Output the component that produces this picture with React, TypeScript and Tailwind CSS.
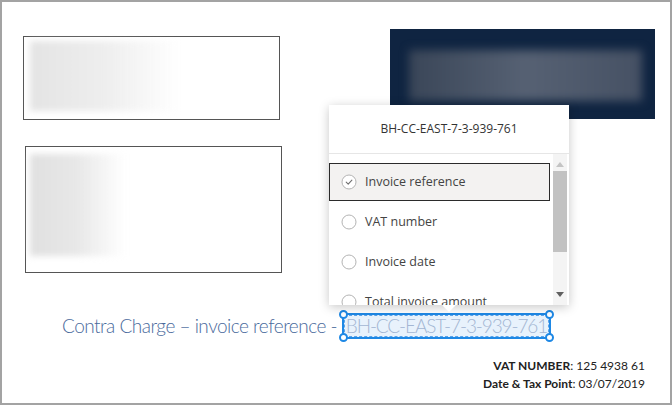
import React from 'react';

const OPTIONS = ['Invoice reference', 'VAT number', 'Invoice date', 'Total invoice amount'];

function Radio({ checked }: { checked: boolean }) {
  return (
    <svg width="16" height="16" viewBox="0 0 16 16" fill="none" className="shrink-0">
      <circle cx="8" cy="8" r="7" fill="white" stroke="#b4b4b4" strokeWidth="1" />
      {checked && (
        <path d="M5.2 8.2L7.2 10.1L10.9 6.1" stroke="#707070" strokeWidth="1.1" strokeLinecap="round" strokeLinejoin="round" />
      )}
    </svg>
  );
}

function Handle({ className }: { className: string }) {
  return <span className={`absolute w-[9px] h-[9px] rounded-full bg-white border-2 border-[#1e88e5] ${className}`} />;
}

function Dropdown() {
  return (
    <div className="absolute left-[327px] top-[103px] w-[240px] h-[200px] bg-white shadow-[0_2px_10px_rgba(0,0,0,0.22)] font-['Open_Sans',sans-serif]">
      <div className="h-[48px] flex items-center justify-center text-[12px] text-[#333]">
        BH-CC-EAST-7-3-939-761
      </div>
      <div className="h-px bg-[#e6e6e6]" />
      <div className="flex h-[151px] overflow-hidden">
        <div className="flex-1 flex flex-col pt-[9px]">
          {OPTIONS.map((label, i) => (
            <div
              key={label}
              className={`flex items-center gap-[8px] shrink-0 h-[38px] pl-[11px] text-[12.5px] text-[#444] ${
                i === 0 ? 'bg-[#f3f2f1] border border-[#2b2b2b]' : 'border border-transparent'
              } ${i > 0 ? 'mt-[2px]' : ''}`}
            >
              <Radio checked={i === 0} />
              <span>{label}</span>
            </div>
          ))}
        </div>
        {/* scrollbar */}
        <div className="w-[14px] ml-[3px] mr-[2px] flex flex-col items-center bg-[#f4f4f4]">
          <svg width="8" height="5" viewBox="0 0 8 5" className="mt-[8px]">
            <path d="M0 5L4 0L8 5Z" fill="#c4c4c4" />
          </svg>
          <div className="w-full h-[81px] mt-[4px] bg-[#c2c2c2]" />
          <div className="flex-1" />
          <svg width="8" height="5" viewBox="0 0 8 5" className="mb-[8px]">
            <path d="M0 0L8 0L4 5Z" fill="#606060" />
          </svg>
        </div>
      </div>
      {/* pointer */}
      <div className="absolute left-[113px] bottom-[-7px] w-0 h-0 border-l-[7px] border-r-[7px] border-t-[7px] border-l-transparent border-r-transparent border-t-white" />
    </div>
  );
}

export default function App() {
  return (
    <div className="relative w-[672px] h-[405px] bg-white border-2 border-[#a3a3a3] overflow-hidden font-['Lato',sans-serif]">
      {/* top area */}
      <div className="flex items-start">
        <div className="flex flex-col">
          <div className="ml-[21px] mt-[34px] w-[257px] h-[84px] border border-[#555] p-[4px] pl-[6px]">
            <div className="w-[150px] h-[70px] bg-gradient-to-r from-[#e4e4e4] via-[#eeeeee] to-transparent blur-[3px]" />
          </div>
          <div className="ml-[23px] mt-[26px] w-[257px] h-[127px] border border-[#555] p-[7px] pl-[4px]">
            <div className="w-[95px] h-[102px] bg-gradient-to-r from-[#e0e0e0] via-[#e8e8e8] to-transparent blur-[3px]" />
          </div>
        </div>
        <div className="ml-auto mr-[15px] mt-[27px] w-[265px] h-[90px] bg-[#0f2441] px-[19px] pt-[21px]">
          <div className="w-[233px] h-[51px] bg-gradient-to-r from-[#3a4658] via-[#566173] to-[#465164] blur-[5px]" />
        </div>
      </div>

      {/* reference line */}
      <div className="flex items-center mt-[40px] pl-[60px] text-[19px] font-light tracking-[-0.5px] text-[#4a6a9c] leading-[20px]">
        <span>Contra Charge – invoice reference -&nbsp;</span>
        <span className="relative border-2 border-[#1e88e5] bg-[#e8f2fc]">
          <span className="block border border-dashed border-[#5aa3e8] px-[1px] text-[#a3b6d3] tracking-[-1.1px]">BH-CC-EAST-7-3-939-761</span>
          <Handle className="-left-[5px] -top-[5px]" />
          <Handle className="-right-[5px] -top-[5px]" />
          <Handle className="-left-[5px] -bottom-[5px]" />
          <Handle className="-right-[5px] -bottom-[5px]" />
        </span>
      </div>

      {/* vat block */}
      <div className="mt-[18px] pr-[25px] flex flex-col items-end text-[12px] leading-[18px] text-[#222]">
        <div>
          <span className="font-bold">VAT NUMBER</span>: 125 4938 61
        </div>
        <div>
          <span className="font-bold">Date &amp; Tax Point</span>: 03/07/2019
        </div>
      </div>

      <Dropdown />
    </div>
  );
}
